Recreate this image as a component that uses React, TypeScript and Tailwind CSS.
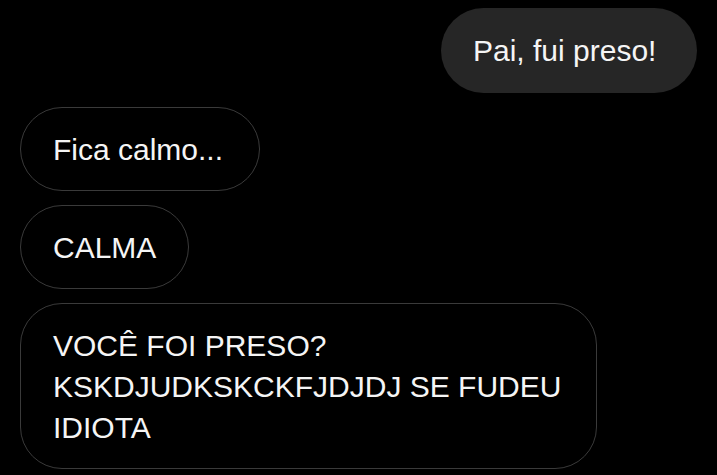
const messages = [
  { id: 1, mine: true, lines: ['Pai, fui preso!'], w: 'w-[256px]', h: 'h-[85px]' },
  { id: 2, mine: false, lines: ['Fica calmo...'], w: 'w-[240px]', h: 'h-[84px]' },
  { id: 3, mine: false, lines: ['CALMA'], w: 'w-[169px]', h: 'h-[84px]' },
  {
    id: 4,
    mine: false,
    lines: ['VOCÊ FOI PRESO?', 'KSKDJUDKSKCKFJDJDJ SE FUDEU', 'IDIOTA'],
    w: 'w-[577px]',
    h: 'h-[166px]',
  },
];

export default function App() {
  return (
    <div
      className="w-[717px] h-[475px] overflow-hidden bg-black text-[#f5f5f5]"
      style={{ fontFamily: '"Liberation Sans", Arial, sans-serif' }}
    >
      <div className="flex flex-col gap-[14px] px-[20px] pt-[8px]">
        {messages.map((m) => (
          <div
            key={m.id}
            className={`${m.w} ${m.h} flex flex-col justify-center pl-[32px] text-[30px] leading-[41px] ${
              m.mine
                ? 'self-end bg-[#262626] rounded-[43px]'
                : 'self-start border-[1.5px] border-[#3a3a3a] rounded-[42px]'
            } ${m.lines.length > 1 ? 'rounded-[30px]' : ''}`}
          >
            {m.lines.map((line) => (
              <span key={line} className="whitespace-nowrap">
                {line}
              </span>
            ))}
          </div>
        ))}
      </div>
    </div>
  );
}
